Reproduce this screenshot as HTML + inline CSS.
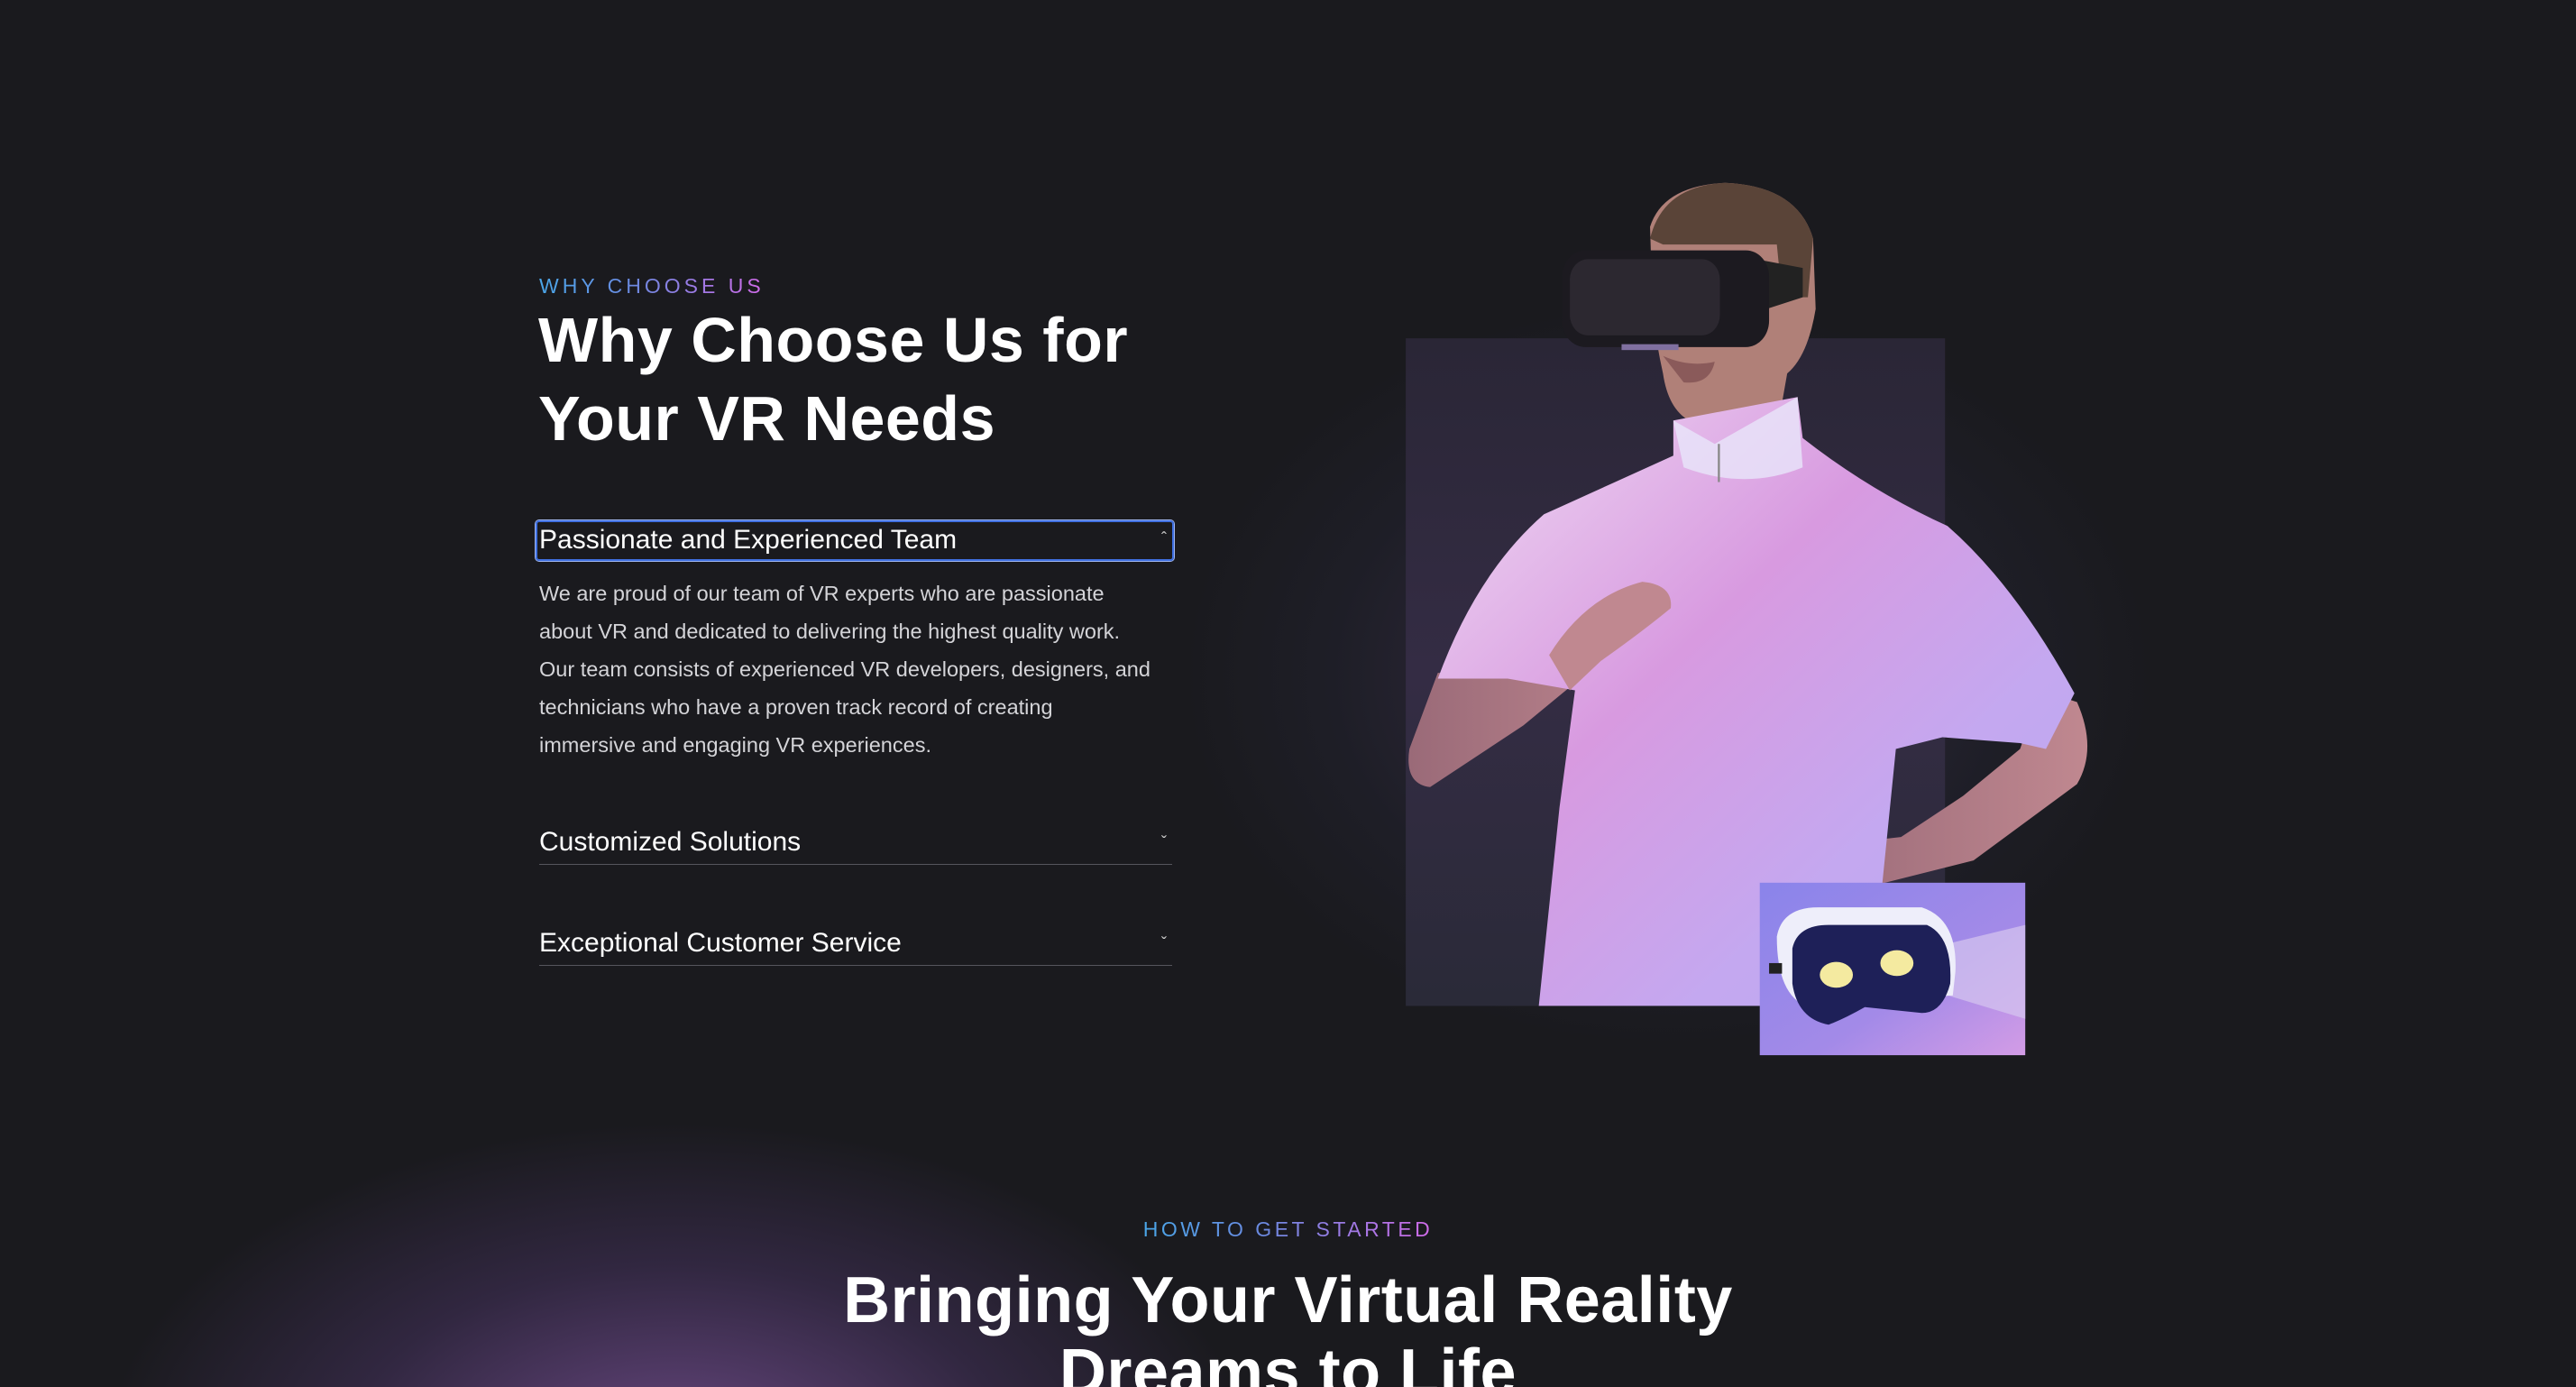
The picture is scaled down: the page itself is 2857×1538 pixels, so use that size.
<!DOCTYPE html>
<html><head><meta charset="utf-8"><style>
*{margin:0;padding:0;box-sizing:border-box}
html,body{width:2857px;height:1538px;overflow:hidden;background:#1a1a1e;font-family:"Liberation Sans",sans-serif;color:#fff}
#wrap{position:relative;width:2857px;height:1538px;overflow:hidden}
.abs{position:absolute}
.glow1{left:-100px;top:1120px;width:1700px;height:1000px;background:radial-gradient(ellipse 48% 48% at 50% 50%,rgba(105,72,130,1),rgba(65,48,88,.6) 45%,rgba(26,26,30,0) 78%)}
.glow2{left:1100px;top:150px;width:1500px;height:1150px;background:radial-gradient(ellipse 45% 45% at 50% 52%,rgba(80,60,100,.55),rgba(40,40,60,.3) 55%,rgba(26,26,30,0) 80%)}
.eyebrow{font-size:23px;letter-spacing:4px;background:linear-gradient(90deg,#4aa6e8,#6a8ae0 40%,#d06ae8);-webkit-background-clip:text;background-clip:text;color:transparent;display:inline-block}
h1{font-size:70px;line-height:87px;font-weight:bold;letter-spacing:0.5px}
.body{font-size:23.5px;line-height:42px;color:#d4d4d8}
.acc{font-size:30px;left:598px;width:702px;border-bottom:1px solid #55555c;height:46px;line-height:42px}
.chev{position:absolute;right:6px;top:0;font-size:18px;color:#ccc}
</style></head><body><div id="wrap">
<div class="abs glow2"></div>
<div class="abs glow1"></div>

<div class="abs eyebrow" style="left:598px;top:304px">WHY CHOOSE US</div>
<h1 class="abs" style="left:597px;top:334px">Why Choose Us for<br>Your VR Needs</h1>

<div class="abs" style="left:594px;top:577px;width:708px;height:45px;border:2px solid #3f6fe0;border-radius:4px;box-shadow:0 0 0 1px #9fb6f0;font-size:30px;line-height:40px;padding-left:2px">Passionate and Experienced Team<span class="chev" style="top:-2px">&#710;</span></div>
<div class="abs body" style="left:598px;top:637px;width:720px">We are proud of our team of VR experts who are passionate<br>about VR and dedicated to delivering the highest quality work.<br>Our team consists of experienced VR developers, designers, and<br>technicians who have a proven track record of creating<br>immersive and engaging VR experiences.</div>

<div class="abs acc" style="top:913px">Customized Solutions<span class="chev">&#711;</span></div>
<div class="abs acc" style="top:1025px">Exceptional Customer Service<span class="chev">&#711;</span></div>

<svg class="abs" style="left:1500px;top:180px" width="900" height="1020" viewBox="0 0 1568 1568" preserveAspectRatio="none">
<defs>
<linearGradient id="pan" x1="0" y1="0" x2="0" y2="1"><stop offset="0" stop-color="#2a2636"/><stop offset=".5" stop-color="#342c44"/><stop offset="1" stop-color="#2a2a38"/></linearGradient>
<linearGradient id="shirt" x1="0" y1="0" x2="1" y2="1"><stop offset="0" stop-color="#f0dcf4"/><stop offset=".4" stop-color="#d89ae0"/><stop offset=".7" stop-color="#c4a8f0"/><stop offset="1" stop-color="#b9a6ee"/></linearGradient>
<linearGradient id="small" x1="0" y1="0" x2="1" y2="1"><stop offset="0" stop-color="#8a84ea"/><stop offset=".6" stop-color="#a38ae8"/><stop offset="1" stop-color="#d39ce6"/></linearGradient>
<linearGradient id="skin" x1="0" y1="0" x2="1" y2="0"><stop offset="0" stop-color="#9a6a78"/><stop offset="1" stop-color="#c08890"/></linearGradient>
</defs>
<rect x="103" y="300" width="1042" height="1138" fill="url(#pan)"/>
<path d="M575,110 Q600,40 720,35 Q860,40 890,130 L895,250 Q880,330 840,360 L830,410 Q760,450 650,440 Q610,420 600,360 Q585,300 580,250 Z" fill="#b08078"/>
<path d="M575,130 Q600,40 720,35 Q860,40 890,130 L880,230 L830,230 L820,140 L600,140 Z" fill="#5a4438"/>
<path d="M600,330 Q650,350 700,340 Q690,380 640,375 Z" fill="#8a5a5a"/>
<path d="M165,870 L110,1000 Q100,1060 150,1065 L330,960 L440,880 Q540,840 600,780 Q630,740 590,720 L470,730 L380,840 L300,880 Z" fill="url(#skin)"/>
<path d="M1330,900 L1400,920 Q1440,1000 1400,1060 L1200,1190 L1020,1230 L880,1230 Q890,1170 960,1160 L1060,1150 L1180,1080 L1290,1000 Z" fill="url(#skin)"/>
<path d="M620,440 L860,400 L870,470 Q1000,560 1150,620 Q1280,720 1395,905 L1340,1000 L1290,990 L1140,980 L1050,1000 L1000,1438 L360,1438 L400,1100 L430,900 L300,880 L165,880 Q240,700 370,600 Q520,540 620,500 Z" fill="url(#shirt)"/>
<path d="M620,440 L700,480 L860,400 L870,520 Q760,560 640,520 Z" fill="#e8e6fa" opacity=".8"/>
<line x1="708" y1="480" x2="708" y2="545" stroke="#888" stroke-width="4"/>
<path d="M380,840 Q450,740 560,715 Q620,720 615,760 Q560,800 480,850 L420,900 Z" fill="#c08890"/>
<path d="M750,160 L870,180 L870,230 L800,250 Z" fill="#222"/>
<rect x="405" y="150" width="400" height="165" rx="45" fill="#1c1a20"/>
<rect x="420" y="165" width="290" height="130" rx="35" fill="#2c2830"/>
<rect x="520" y="310" width="110" height="10" fill="#8070a0"/>
<rect x="787" y="1228" width="513" height="294" fill="url(#small)"/>
<path d="M1160,1330 L1300,1300 L1300,1460 L1150,1420 Z" fill="#d6c6f0" opacity=".7"/>
<path d="M820,1320 Q830,1270 900,1270 L1100,1270 Q1170,1290 1165,1380 L1160,1420 L880,1440 Q820,1420 820,1320 Z" fill="#eeeefa"/>
<path d="M850,1340 Q860,1300 920,1300 L1110,1300 Q1160,1320 1155,1400 Q1140,1450 1100,1450 L990,1440 Q950,1460 920,1470 Q860,1460 850,1400 Z" fill="#1e2058"/>
<ellipse cx="935" cy="1385" rx="32" ry="22" fill="#f4eaa0"/>
<ellipse cx="1052" cy="1365" rx="32" ry="22" fill="#f4eaa0"/>
<rect x="805" y="1365" width="25" height="18" fill="#222"/>
</svg>

<div class="abs" style="left:0;top:1350px;width:2857px;text-align:center"><span class="eyebrow" style="font-size:23px;letter-spacing:3.5px">HOW TO GET STARTED</span></div>
<h1 class="abs" style="left:0;top:1402px;width:2857px;text-align:center;line-height:80px;font-size:72px">Bringing Your Virtual Reality<br>Dreams to Life</h1>
</div></body></html>
